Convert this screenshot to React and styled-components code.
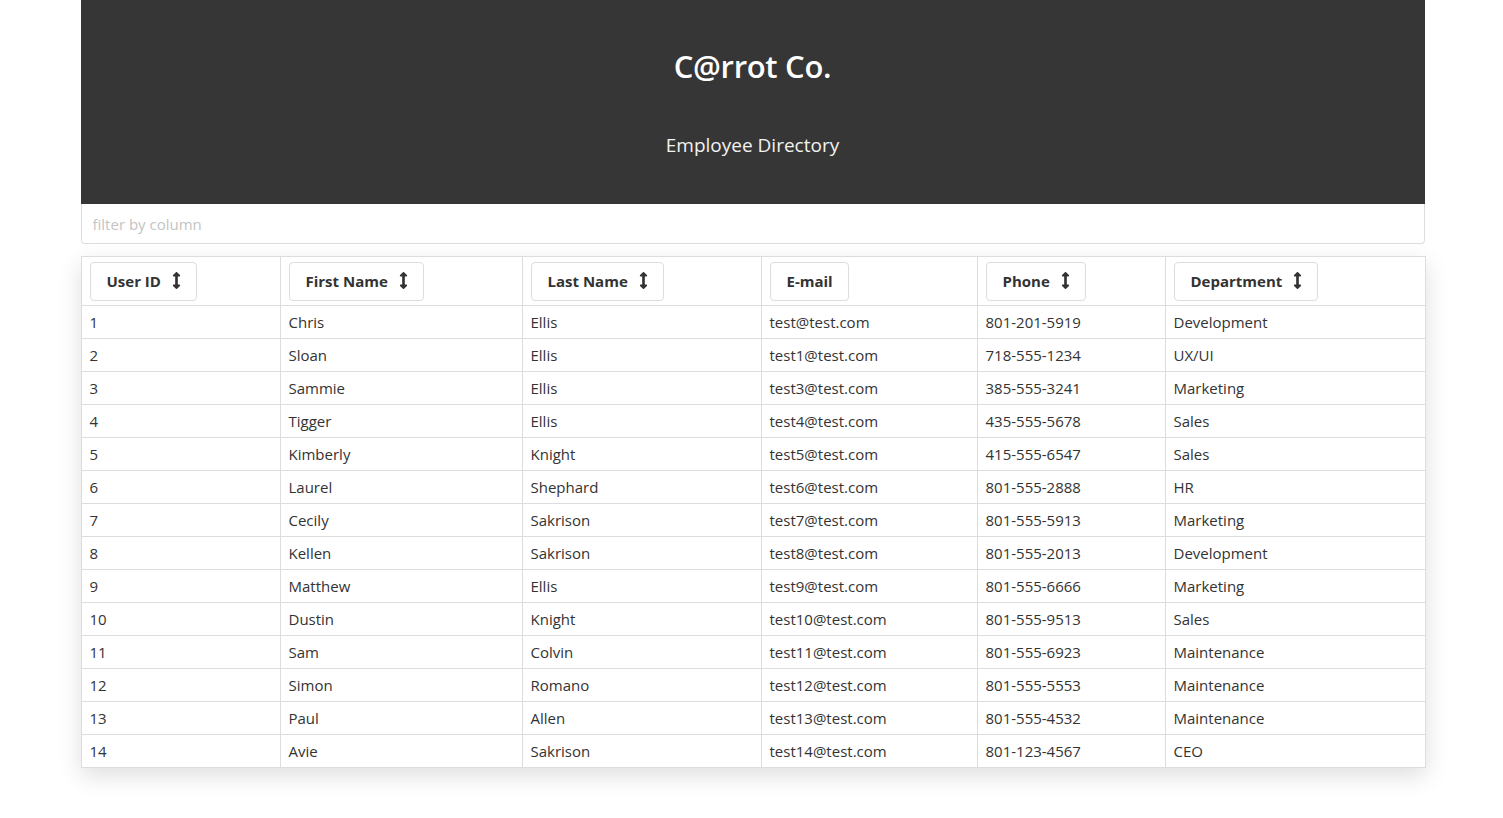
import React, { useState } from 'react';
import styled, { createGlobalStyle } from 'styled-components';
import { FaArrowsAltV } from 'react-icons/fa';

const GlobalStyle = createGlobalStyle`
  body {
    margin: 0;
    background: #fff;
    font-family: "Open Sans", "Noto Sans", "Liberation Sans", sans-serif;
    color: #333;
  }
`;

const Page = styled.div`
  width: 1344px;
  margin: 0 auto;
  padding-left: 2px;
  padding-bottom: 40px;
`;

const Header = styled.header`
  height: 204px;
  background: #363636;
  color: #fff;
  display: flex;
  flex-direction: column;
  align-items: center;
  box-sizing: border-box;
  padding-top: 43px;
`;

const Title = styled.h1`
  margin: 0;
  font-size: 31px;
  font-weight: 600;
  line-height: 46px;
  letter-spacing: -0.3px;
`;

const Subtitle = styled.p`
  margin: 41px 0 0;
  font-size: 19px;
  line-height: 30px;
  color: #f2f2f2;
`;

const Filter = styled.input`
  display: block;
  width: 100%;
  box-sizing: border-box;
  height: 40px;
  border: 1px solid #ddd;
  border-top: none;
  border-radius: 0 0 4px 4px;
  padding: 0 11px;
  font: inherit;
  font-size: 15px;
  color: #333;
  outline: none;
  &::placeholder {
    color: #c4c4c4;
  }
`;

const Table = styled.table`
  width: 100%;
  margin-top: 12px;
  border-collapse: collapse;
  table-layout: fixed;
  box-shadow: 0 8px 22px rgba(0, 0, 0, 0.13);
  font-size: 15px;
`;

const Col = styled.col`
  width: ${p => p.w}px;
`;

const Th = styled.th`
  border: 1px solid #ddd;
  padding: 5px 8px 4px;
  text-align: left;
`;

const SortButton = styled.button`
  display: inline-flex;
  align-items: center;
  gap: 11px;
  height: 39px;
  box-sizing: border-box;
  padding: 0 15px 2px 16px;
  background: #fff;
  border: 1px solid #ddd;
  border-radius: 4px;
  font: inherit;
  font-size: 15px;
  font-weight: 700;
  color: #333;
  cursor: pointer;
  svg {
    width: 9px;
    height: 17px;
    color: #333;
  }
`;

const Td = styled.td`
  border: 1px solid #ddd;
  padding: 4px 8px;
  height: 24px;
  line-height: 24px;
  white-space: nowrap;
`;

const columns = [
  { key: 'id', label: 'User ID', w: 199, sort: true },
  { key: 'first', label: 'First Name', w: 242, sort: true },
  { key: 'last', label: 'Last Name', w: 239, sort: true },
  { key: 'email', label: 'E-mail', w: 216, sort: false },
  { key: 'phone', label: 'Phone', w: 188, sort: true },
  { key: 'dept', label: 'Department', w: 260, sort: true },
];

const employees = [
  [1, 'Chris', 'Ellis', 'test@test.com', '801-201-5919', 'Development'],
  [2, 'Sloan', 'Ellis', 'test1@test.com', '718-555-1234', 'UX/UI'],
  [3, 'Sammie', 'Ellis', 'test3@test.com', '385-555-3241', 'Marketing'],
  [4, 'Tigger', 'Ellis', 'test4@test.com', '435-555-5678', 'Sales'],
  [5, 'Kimberly', 'Knight', 'test5@test.com', '415-555-6547', 'Sales'],
  [6, 'Laurel', 'Shephard', 'test6@test.com', '801-555-2888', 'HR'],
  [7, 'Cecily', 'Sakrison', 'test7@test.com', '801-555-5913', 'Marketing'],
  [8, 'Kellen', 'Sakrison', 'test8@test.com', '801-555-2013', 'Development'],
  [9, 'Matthew', 'Ellis', 'test9@test.com', '801-555-6666', 'Marketing'],
  [10, 'Dustin', 'Knight', 'test10@test.com', '801-555-9513', 'Sales'],
  [11, 'Sam', 'Colvin', 'test11@test.com', '801-555-6923', 'Maintenance'],
  [12, 'Simon', 'Romano', 'test12@test.com', '801-555-5553', 'Maintenance'],
  [13, 'Paul', 'Allen', 'test13@test.com', '801-555-4532', 'Maintenance'],
  [14, 'Avie', 'Sakrison', 'test14@test.com', '801-123-4567', 'CEO'],
];

const App = () => {
  const [filter, setFilter] = useState('');

  const rows = employees.filter(row =>
    row.some(v => String(v).toLowerCase().includes(filter.toLowerCase()))
  );

  return (
    <Page>
      <GlobalStyle />
      <Header>
        <Title>C@rrot Co.</Title>
        <Subtitle>Employee Directory</Subtitle>
      </Header>
      <Filter
        placeholder="filter by column"
        value={filter}
        onChange={e => setFilter(e.target.value)}
      />
      <Table>
        <colgroup>
          {columns.map(col => (
            <Col key={col.key} w={col.w} />
          ))}
        </colgroup>
        <thead>
          <tr>
            {columns.map(col => (
              <Th key={col.key}>
                <SortButton>
                  {col.label}
                  {col.sort && <FaArrowsAltV />}
                </SortButton>
              </Th>
            ))}
          </tr>
        </thead>
        <tbody>
          {rows.map(row => (
            <tr key={row[0]}>
              {row.map((v, i) => (
                <Td key={i}>{v}</Td>
              ))}
            </tr>
          ))}
        </tbody>
      </Table>
    </Page>
  );
};

export default App;
